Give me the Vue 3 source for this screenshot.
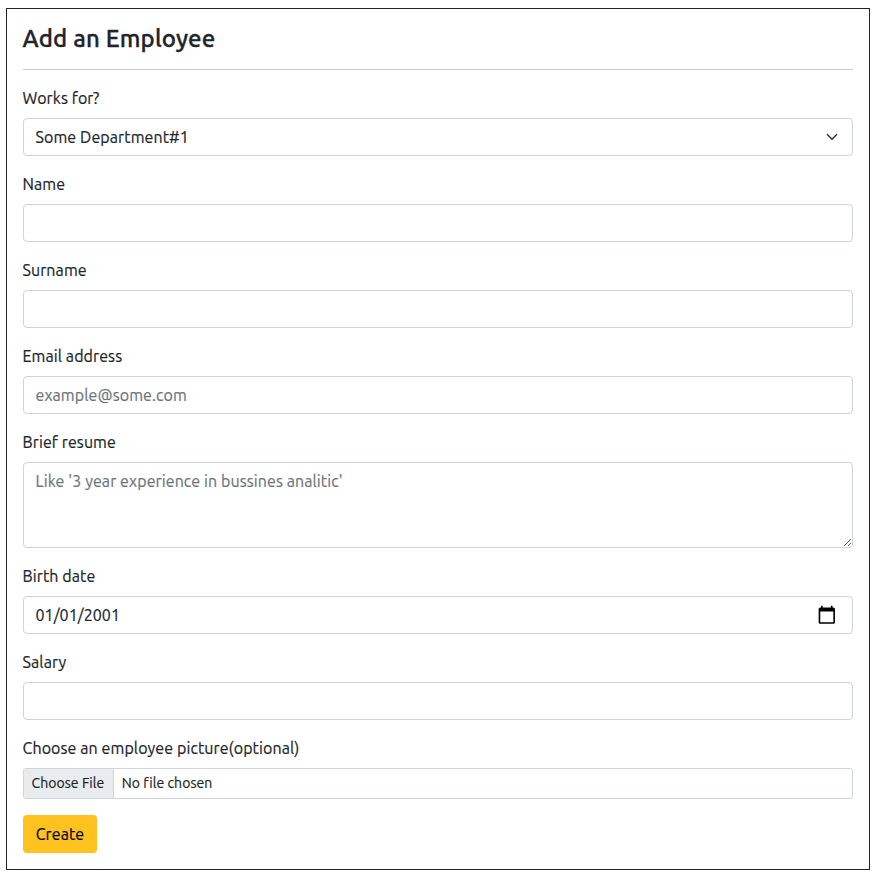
<script setup>
import { ref } from 'vue'

const department = ref('Some Department#1')
const birthDate = ref('01/01/2001')
</script>

<template>
  <form class="card" @submit.prevent>
    <h1>Add an Employee</h1>
    <hr />
    <div class="field">
      <label>Works for?</label>
      <div class="control"><span>{{ department }}</span>
        <svg class="chevron" viewBox="0 0 16 16"><path d="m2 5 6 6 6-6" /></svg>
      </div>
    </div>
    <div class="field"><label>Name</label><input class="control" /></div>
    <div class="field"><label>Surname</label><input class="control" /></div>
    <div class="field"><label>Email address</label><input class="control" placeholder="example@some.com" /></div>
    <div class="field"><label>Brief resume</label><textarea class="control area" placeholder="Like '3 year experience in bussines analitic'"></textarea></div>
    <div class="field">
      <label>Birth date</label>
      <div class="control date"><span>{{ birthDate }}</span>
        <svg class="calendar" viewBox="0 0 24 24"><path d="M20 3h-1V1h-2v2H7V1H5v2H4c-1.1 0-2 .9-2 2v16c0 1.1.9 2 2 2h16c1.1 0 2-.9 2-2V5c0-1.1-.9-2-2-2zm0 18H4V8h16v13z" /></svg>
      </div>
    </div>
    <div class="field"><label>Salary</label><input class="control" /></div>
    <div class="field">
      <label>Choose an employee picture(optional)</label>
      <div class="file"><span class="choose">Choose File</span><span class="none">No file chosen</span></div>
    </div>
    <button class="create">Create</button>
  </form>
</template>

<style>
body { background: #fff; }
</style>

<style scoped>
* { box-sizing: border-box; }
.card {
  width: 864px;
  height: 862px;
  margin: 8px 0 0 6px;
  padding: 16px;
  border: 1px solid #212529;
  color: #212529;
  font: 16px/24px Ubuntu, "Noto Sans", sans-serif;
  letter-spacing: 0.095px;
  -webkit-text-stroke: 0.2px;
}
h1 { margin: 0 0 16px; height: 28px; font-size: 24px; line-height: 28px; font-weight: 500; letter-spacing: 0.16px; text-indent: -0.5px; white-space: nowrap; -webkit-text-stroke: 0.35px; }
hr { margin: 0 0 16px; border: 0; height: 1px; background: #c8c9ca; }
.field { margin-bottom: 16px; }
label { display: block; height: 24px; margin-bottom: 8px; text-indent: -0.5px; white-space: nowrap; }
.control {
  display: flex;
  align-items: center;
  width: 100%;
  height: 38px;
  padding: 6px 12px 6px 11.5px;
  border: 1px solid #ced4da;
  border-radius: 4px;
  background: #fff;
  color: #212529;
  font: inherit;
  letter-spacing: inherit;
  outline: 0;
}
.control::placeholder { color: #6c757d; opacity: 1; }
.date { letter-spacing: 0.05px; }
.area { height: 86px; display: block; resize: vertical; }
.chevron { width: 16px; height: 12px; margin-left: auto; fill: none; stroke: #343a40; stroke-width: 2.2; stroke-linecap: round; stroke-linejoin: round; }
.calendar { width: 19.6px; height: 19.6px; margin: 0 3.2px 0.4px auto; }
.file { display: flex; height: 31px; border: 1px solid #ced4da; border-radius: 3px; overflow: hidden; font-size: 14px; line-height: 28px; letter-spacing: 0.06px; white-space: nowrap; }
.choose { width: 90px; padding-left: 7.5px; background: #e9ecef; border-right: 1px solid #ced4da; }
.none { padding-left: 7.8px; }
.create { display: block; width: 74px; height: 38px; padding: 0; border: 0; border-radius: 4px; background: #ffc21f; color: #000; font: inherit; letter-spacing: inherit; }
</style>
